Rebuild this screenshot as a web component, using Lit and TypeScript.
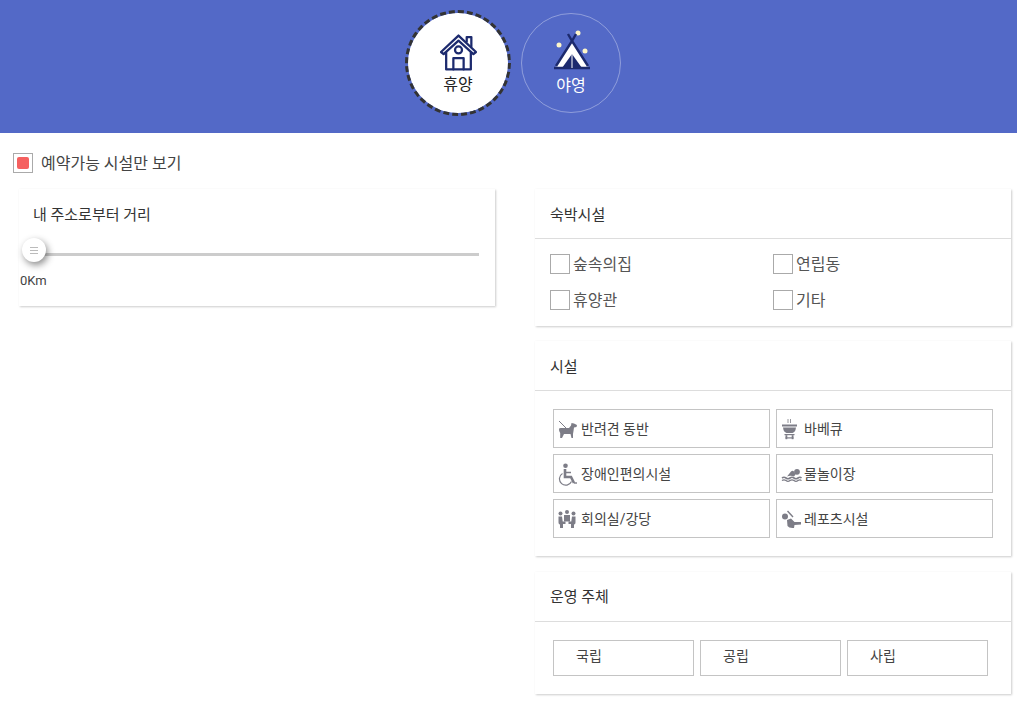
import { LitElement, html, css, svg } from "lit";
import { customElement } from "lit/decorators.js";

const G = "#7d7d87";
const icons: Record<string, unknown> = {
  dog: svg`<g fill="${G}"><path d="M2 4 L9 11" stroke="${G}" stroke-width="1" fill="none"/><path d="M2 12 Q2 11 4 11 H12 L14 8.5 L14.5 6 L17 6.5 L20 8 L19.5 10 L17 10.5 L16.5 14 L16 17 L16 21 L14.5 21 L13.5 17 L7 17 L5 21 L3.2 21 L3.2 16 Q1.8 14 2 12Z"/></g>`,
  wheel: svg`<g><circle cx="8.5" cy="3.8" r="2.3" fill="${G}"/><path d="M8 7 L8 15 L14 15 L17 21" stroke="${G}" stroke-width="2.6" fill="none"/><path d="M8 10.5 L14 10.5" stroke="${G}" stroke-width="1.5"/><path d="M5.5 11.5 A6.3 6.3 0 1 0 14.5 19.5" stroke="${G}" stroke-width="1.2" fill="none"/><path d="M17 21 H20" stroke="${G}" stroke-width="1.4"/></g>`,
  meet: svg`<g fill="${G}"><circle cx="3.5" cy="6.5" r="2"/><circle cx="10" cy="5" r="2"/><circle cx="16.5" cy="6.5" r="2"/><rect x="7" y="8" width="6" height="6.5"/><path d="M1.5 9.5 H5 L5.7 14.5 H8.5 V17 H6 V21 H3 V17.5 Q1.5 17.5 1.5 15.5Z"/><path d="M18.5 9.5 H15 L14.3 14.5 H11.5 V17 H14 V21 H17 V17.5 Q18.5 17.5 18.5 15.5Z"/></g>`,
  bbq: svg`<g fill="${G}"><path d="M8 2 V6 M10.5 2 V6" stroke="${G}" stroke-width=".8"/><rect x="2" y="7.5" width="15" height="2"/><path d="M3 10.5 H16 Q15.5 15 12.5 16 H6.5 Q3.5 15 3 10.5Z"/><rect x="4.5" y="17" width="10" height="1.2"/><rect x="5.5" y="18.2" width="1.8" height="4"/><rect x="11.7" y="18.2" width="1.8" height="4"/><rect x="5.5" y="20.3" width="8" height="1.2"/></g>`,
  swim: svg`<g fill="${G}"><circle cx="17" cy="9.8" r="2.9"/><path d="M7 14.5 L11 9.5 Q12.5 8 14 9.5 L15.5 12.5 L14 14.5 Q10.5 13 7 14.5Z"/><path d="M2 16 Q4 14.5 6 16 T10 16 T14 16 T18 16 T21.5 16" stroke="${G}" stroke-width="1.6" fill="none"/><path d="M2 18.6 Q4 17.1 6 18.6 T10 18.6 T14 18.6 T18 18.6 T21.5 18.6" stroke="${G}" stroke-width="1.3" fill="none"/></g>`,
  sport: svg`<g fill="${G}"><circle cx="5" cy="9.5" r="3"/><path d="M7.5 4 L13 10" stroke="${G}" stroke-width="1.4"/><path d="M7 13 L11 11.5 L14.5 15 L21 15 L21 17.5 L14.5 18 L14 21 Q9 21.5 7.5 19Z"/></g>`,
};

@customElement("app-root")
export class AppRoot extends LitElement {
  static styles = css`
    :host { display: block; width: 1017px; height: 704px; overflow: hidden; background: #fff; color: #333; font-family: Roboto, "Noto Sans CJK KR", sans-serif; font-size: 15px; }
    * { box-sizing: border-box; }
    .top { height: 133px; background: #5369c7; display: flex; justify-content: center; align-items: flex-start; padding: 10px 0 0 9px; gap: 10px; }
    .circle { width: 100px; height: 100px; border-radius: 50%; margin-top: 3px; display: flex; flex-direction: column; align-items: center; font-size: 16px; line-height: 20px; }
    .on { width: 106px; height: 106px; margin-top: 0; border: 3px dashed #333; background: #fff; background-clip: padding-box; padding: 20px 0 0; color: #222; }
    .off { border: 1px solid rgba(255,255,255,.35); color: #fff; padding: 16px 0 0; }
    .circle svg { display: block; margin-bottom: 4px; }
    .off svg { margin-bottom: 6px; margin-left: 1px; }
    .avail { height: 56px; padding: 20px 0 0 13px; display: flex; align-items: flex-start; gap: 8px; line-height: 22px; font-size: 16px; color: #444; }
    .box { width: 20px; height: 20px; border: 1px solid #aaa; background: #fff; flex: none; display: block; }
    .box.checked { padding: 3px; }
    .box.checked i { display: block; width: 12px; height: 12px; border-radius: 2px; background: #f5605f; }
    .cols { display: flex; align-items: flex-start; padding-left: 19px; }
    .left { width: 476px; margin-right: 40px; }
    .right { width: 476px; display: flex; flex-direction: column; }
    .card { background: #fff; box-shadow: 1px 1px 2px rgba(0,0,0,.2), 0 0 1px rgba(0,0,0,.04); }
    .card.slider { height: 117px; padding: 16px 15px 0 14px; position: relative; }
    .slider h3 { margin: 0; font-weight: 400; font-size: 15px; line-height: 20px; color: #333; }
    .track { margin: 28px 0 0 1px; width: 445px; height: 3px; background: #ccc; position: relative; }
    .thumb { position: absolute; left: -12px; top: -15px; width: 24px; height: 24px; border-radius: 50%; background: #fff; box-shadow: 2px 3px 7px rgba(0,0,0,.45); display: flex; flex-direction: column; justify-content: center; align-items: center; gap: 2px; }
    .thumb b { display: block; width: 8px; height: 1px; background: #bbb; }
    .km { margin: 15px 0 0 -13px; font-size: 13px; line-height: 20px; color: #444; }
    .head { height: 50px; padding: 16px 15px 0; border-bottom: 1px solid #ddd; font-size: 15px; line-height: 20px; color: #333; }
    .c1 { height: 137px; margin-bottom: 15px; }
    .c2 { height: 215px; margin-bottom: 16px; }
    .c3 { height: 122px; }
    .c3 .head { padding-top: 15px; }
    .checks { display: grid; grid-template-columns: 223px 223px; row-gap: 16px; padding: 15px 15px 0; }
    .check { display: flex; gap: 3px; line-height: 22px; height: 20px; color: #555; font-size: 16px; }
    .tiles { display: grid; grid-template-columns: 217px 217px; gap: 6px; padding: 18px 0 0 18px; }
    .tile { height: 39px; border: 1px solid #c4c4c4; display: flex; align-items: center; padding-left: 3px; font-size: 14px; color: #444; }
    .tile span { position: relative; top: -1px; }
    .tile svg { flex: none; }
    .tiles3 { display: grid; grid-template-columns: 141px 141px 141px; gap: 6px; padding: 18px 0 0 18px; }
    .t3 { height: 36px; border: 1px solid #c4c4c4; padding: 5px 0 0 22px; font-size: 14px; line-height: 20px; color: #444; }
  `;

  render() {
    const tile = (i: string, t: string) => html`<div class="tile"><svg width="24" height="24" viewBox="0 0 24 24">${icons[i]}</svg><span>${t}</span></div>`;
    const chk = (t: string) => html`<div class="check"><span class="box"></span>${t}</div>`;
    return html`
      <div class="top">
        <div class="circle on">
          <svg width="37" height="38" viewBox="0 0 36 36" fill="none" stroke="#1c2a6e" stroke-width="2.2" stroke-linejoin="round" stroke-linecap="round">
            <path d="M1 18 L18 2 L35 18 L32.5 20 L18 7 L3.5 20 Z"/>
            <path d="M26 8 V3.5 H30.5 V13"/>
            <path d="M6 18.5 V35 H30 V18.5"/>
            <circle cx="18" cy="16" r="3.4"/>
            <path d="M13 35 V24 H23 V35"/>
          </svg>
          휴양
        </div>
        <div class="circle off">
          <svg width="38" height="40" viewBox="0 0 38 40">
            <circle cx="25" cy="3" r="2.5" fill="#fdf6c9"/><circle cx="6" cy="15" r="2.5" fill="#fdf6c9"/><circle cx="32" cy="21" r="2.5" fill="#fdf6c9"/>
            <path d="M2 38 H36 L19 11 Z" fill="#fff"/>
            <path d="M15 4 L19 11 L23 4 M19 11 L3 36 M19 11 L35 36 M1 38 H37" stroke="#1c2a6e" stroke-width="2.4" fill="none"/>
            <path d="M9 38 L19 24 L29 38 Z" fill="#1c2a6e"/>
            <path d="M19 24 V38" stroke="#fff" stroke-width="1"/>
          </svg>
          야영
        </div>
      </div>
      <div class="avail"><span class="box checked"><i></i></span>예약가능 시설만 보기</div>
      <div class="cols">
        <div class="left">
          <div class="card slider">
            <h3>내 주소로부터 거리</h3>
            <div class="track"><div class="thumb"><b></b><b></b><b></b></div></div>
            <div class="km">0Km</div>
          </div>
        </div>
        <div class="right">
          <div class="card c1">
            <div class="head">숙박시설</div>
            <div class="checks">${chk("숲속의집")}${chk("연립동")}${chk("휴양관")}${chk("기타")}</div>
          </div>
          <div class="card c2">
            <div class="head">시설</div>
            <div class="tiles">
              ${tile("dog", "반려견 동반")}${tile("bbq", "바베큐")}
              ${tile("wheel", "장애인편의시설")}${tile("swim", "물놀이장")}
              ${tile("meet", "회의실/강당")}${tile("sport", "레포츠시설")}
            </div>
          </div>
          <div class="card c3">
            <div class="head">운영 주체</div>
            <div class="tiles3"><div class="t3">국립</div><div class="t3">공립</div><div class="t3">사립</div></div>
          </div>
        </div>
      </div>
    `;
  }
}
